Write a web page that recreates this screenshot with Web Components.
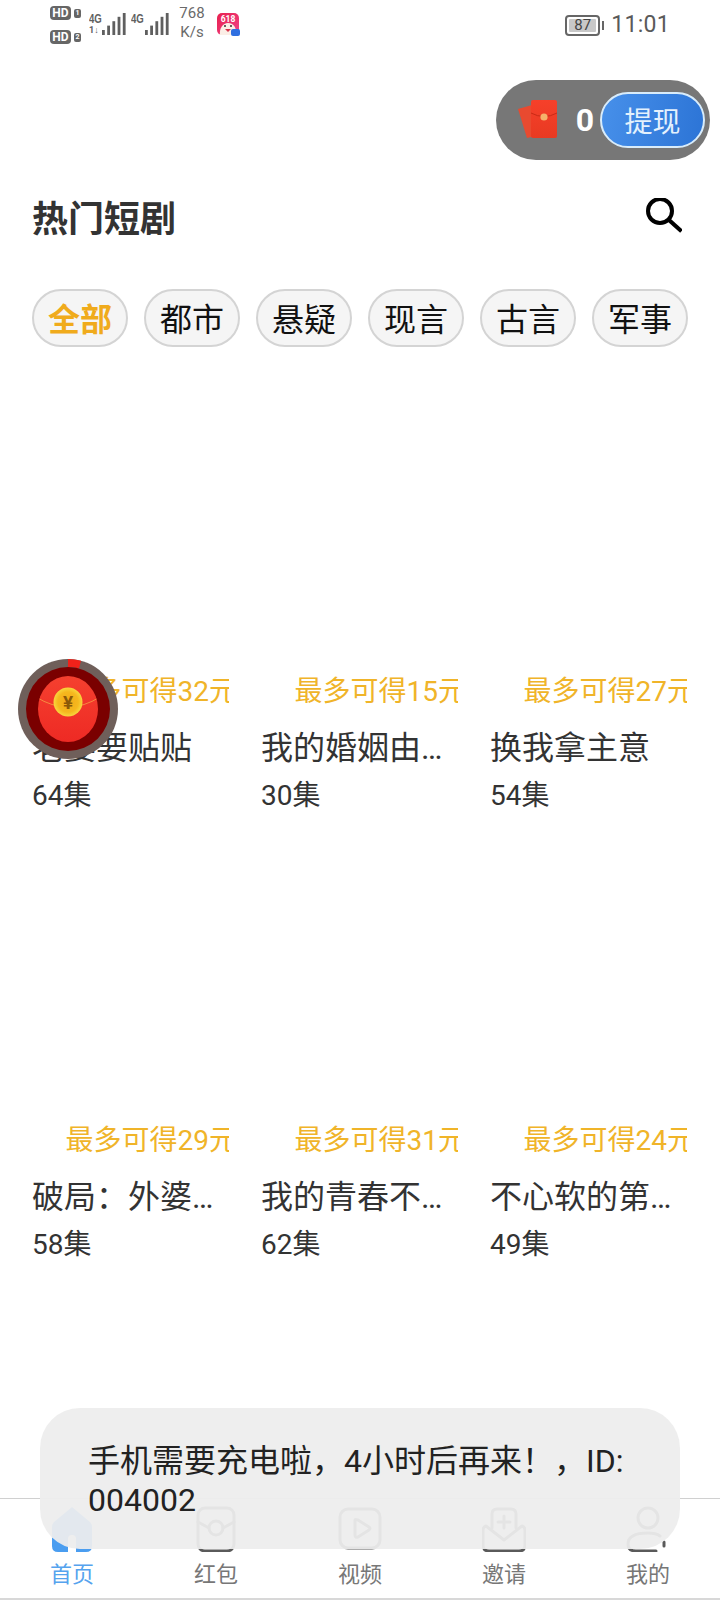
<!DOCTYPE html>
<html lang="zh-CN">
<head>
<meta charset="utf-8">
<title>热门短剧</title>
<style>
  html, body { margin: 0; background: #fff; }
  body { font-family: Roboto, "Noto Sans CJK SC", sans-serif; width: 720px; height: 1600px; overflow: hidden; }
</style>
</head>
<body>
<app-page>
  <status-bar></status-bar>
  <coin-pill></coin-pill>
  <page-header>热门短剧</page-header>
  <filter-row>
    <filter-pill active>全部</filter-pill>
    <filter-pill>都市</filter-pill>
    <filter-pill>悬疑</filter-pill>
    <filter-pill>现言</filter-pill>
    <filter-pill>古言</filter-pill>
    <filter-pill>军事</filter-pill>
  </filter-row>
  <drama-grid>
    <drama-card reward="最多可得32元" name="老婆要贴贴" eps="64集"></drama-card>
    <drama-card reward="最多可得15元" name="我的婚姻由…" eps="30集"></drama-card>
    <drama-card reward="最多可得27元" name="换我拿主意" eps="54集"></drama-card>
    <drama-card reward="最多可得29元" name="破局：外婆…" eps="58集"></drama-card>
    <drama-card reward="最多可得31元" name="我的青春不…" eps="62集"></drama-card>
    <drama-card reward="最多可得24元" name="不心软的第…" eps="49集"></drama-card>
  </drama-grid>
  <tab-bar>
    <tab-item icon="home" active>首页</tab-item>
    <tab-item icon="packet">红包</tab-item>
    <tab-item icon="video">视频</tab-item>
    <tab-item icon="invite">邀请</tab-item>
    <tab-item icon="me">我的</tab-item>
  </tab-bar>
  <float-packet></float-packet>
  <toast-msg>手机需要充电啦，4小时后再来！，ID: 004002</toast-msg>
</app-page>

<script>
// helper para no repetir attachShadow en cada clase
class Base extends HTMLElement {
  constructor() {
    super();
    this.attachShadow({ mode: "open" });
  }
  connectedCallback() {
    this.shadowRoot.innerHTML = this.html();
  }
}

class AppPage extends Base {
  html() {
    return `<style>
      :host { display: flex; flex-direction: column; position: relative; width: 720px; height: 1600px; overflow: hidden; background: #fff; }
    </style><slot></slot>`;
  }
}

class StatusBar extends Base {
  html() {
    const bars = () => {
      let out = "";
      for (let i = 0; i < 5; i++) {
        const h = 5 + i * 4.4;
        out += `<rect x="${i * 5.2}" y="${22 - h}" width="2.8" height="${h}" fill="#5f5f5f"/>`;
      }
      return `<svg width="24" height="22" viewBox="0 0 24 22">${out}</svg>`;
    };
    return `<style>
      :host { display: flex; align-items: flex-start; height: 60px; position: relative; color: #5f5f5f; font-family: Roboto, "Noto Sans CJK SC", sans-serif; }
      .hd { display: flex; flex-direction: column; gap: 10px; margin: 6px 0 0 50px; width: 32px; }
      .hd div { display: flex; align-items: center; gap: 3px; }
      .hd b { width: 21px; height: 14px; border-radius: 4px; background: #666; color: #fff; font: 700 12px/14px Roboto, sans-serif; text-align: center; }
      .hd i { width: 7px; height: 9px; border-radius: 2px; background: #666; color: #fff; font: 700 7px/9px Roboto, sans-serif; text-align: center; }
      .sig { display: flex; align-items: flex-end; margin: 13px 0 0 6px; position: relative; height: 22px; }
      .sig small { position: absolute; left: 1px; top: 0; font: 700 12px/12px "Liberation Sans", sans-serif; transform: scaleX(.8); transform-origin: 0 0; }
      .sig svg { margin-left: 14px; }
      .sig + .sig { margin-left: 4px; }
      .sig + .sig svg { margin-left: 15px; }
      .sig u { position: absolute; left: 1px; bottom: 0; font: 700 9px/9px Roboto, sans-serif; text-decoration: none; }
      .speed { margin: 4px 0 0 9px; width: 28px; text-align: center; font: 15px/19px Roboto, sans-serif; color: #6a6a6a; }
      .app { margin: 13px 0 0 11px; }
      .right { margin: 12px 0 0 auto; padding-right: 50px; display: flex; align-items: center; gap: 2px; }
      .batt { width: 35px; height: 21px; box-sizing: border-box; border: 2px solid #666; border-radius: 4px; padding: 2px; }
      .batt span { display: block; height: 100%; width: 27px; background: #c8c8c8; border-radius: 1px; font: 15px/13px Roboto, sans-serif; text-align: center; color: #444; }
      .nub { width: 2px; height: 9px; background: #666; }
      .time { font: 23px/26px Roboto, sans-serif; margin-left: 5px; letter-spacing: .3px; color: #5a5a5a; }
    </style>
    <div class="hd"><div><b>HD</b><i>1</i></div><div><b>HD</b><i>2</i></div></div>
    <div class="sig"><small>4G</small><u>1↓</u>${bars()}</div>
    <div class="sig"><small>4G</small>${bars()}</div>
    <div class="speed">768<br>K/s</div>
    <svg class="app" width="23" height="23" viewBox="0 0 23 23">
      <defs><linearGradient id="a" x1="0" y1="0" x2="1" y2="1"><stop offset="0" stop-color="#e8204e"/><stop offset="1" stop-color="#f0438a"/></linearGradient></defs>
      <rect width="22" height="22" rx="5" fill="url(#a)"/>
      <path d="M3 22c-1-7 3-12 8-12s9 4 8 12z" fill="#fbeee6"/>
      <circle cx="8" cy="13" r="1" fill="#333"/><circle cx="14" cy="13" r="1" fill="#333"/>
      <path d="M8 16h6l-3 3z" fill="#d8304a"/>
      <text x="11" y="9" text-anchor="middle" font-family="Roboto" font-size="8.500" font-weight="700" fill="#fff">618</text>
      <rect x="14" y="16" width="9" height="7" rx="2" fill="#2f6fe0"/>
    </svg>
    <div class="right">
      <div class="batt"><span>87</span></div><div class="nub"></div>
      <div class="time">11:01</div>
    </div>`;
  }
}

class CoinPill extends Base {
  html() {
    return `<style>
      :host { display: flex; align-self: flex-end; align-items: center; box-sizing: border-box; width: 214px; height: 80px; margin: 20px 10px 0 0; padding: 0 5px 0 22px; border-radius: 40px; background: #777; }
      svg { flex: none; margin-top: -2px; }
      b { flex: 1; text-align: right; padding-right: 6px; font: 700 32px/1 Roboto, sans-serif; color: #fff; }
      button { flex: none; width: 105px; height: 56px; box-sizing: border-box; border: 2px solid #d8ecfb; border-radius: 28px; background: linear-gradient(100deg, #4790ea, #2c74d6); color: #e4f1fd; padding: 0; font: 28px/1 "Noto Sans CJK SC", sans-serif; }
    </style>
    <svg width="40" height="40" viewBox="0 0 40 40">
      <defs><linearGradient id="e" x1="0" y1="0" x2="0" y2="1"><stop offset="0" stop-color="#f6402a"/><stop offset="1" stop-color="#e83a22"/></linearGradient></defs>
      <path d="M0 10l14-4 8 30-13 3z" fill="#e84a30"/>
      <rect x="13" y="1" width="26" height="38" rx="2" fill="url(#e)"/>
      <path d="M13 14q13 7 26 0" fill="none" stroke="#c92a15" stroke-width="1"/>
      <circle cx="26" cy="18" r="3.600" fill="#f5b26a"/>
    </svg>
    <b>0</b><button>提现</button>`;
  }
}

class PageHeader extends Base {
  html() {
    return `<style>
      :host { display: flex; align-items: center; justify-content: space-between; height: 56px; margin-top: 28px; padding: 0 38px 0 32px; }
      h1 { margin: 0; font: 700 36px/56px "Noto Sans CJK SC", sans-serif; color: #333; }
    </style>
    <h1><slot></slot></h1>
    <svg width="36" height="36" viewBox="0 0 36 36" fill="none" stroke="#000" stroke-width="4">
      <circle cx="14" cy="13" r="12"/><path d="M23 22l11 10" stroke-linecap="square"/>
    </svg>`;
  }
}

class FilterRow extends Base {
  html() {
    return `<style>
      :host { display: flex; gap: 16px; margin-top: 45px; padding-left: 32px; }
    </style><slot></slot>`;
  }
}

class FilterPill extends Base {
  html() {
    const active = this.hasAttribute("active");
    return `<style>
      :host { display: block; box-sizing: border-box; width: 96px; height: 58px; border: 2px solid #d4d4d4; border-radius: 29px; background: #f5f5f5; text-align: center; font: ${active ? 700 : 400} 32px/52px "Noto Sans CJK SC", sans-serif; color: ${active ? "#f0ab1c" : "#111"}; }
    </style><slot></slot>`;
  }
}

class DramaGrid extends Base {
  html() {
    return `<style>
      :host { display: grid; grid-template-columns: repeat(3, 197px); column-gap: 32px; grid-auto-rows: 449px; padding-left: 32px; margin-top: 18px; }
    </style><slot></slot>`;
  }
}

class DramaCard extends Base {
  html() {
    return `<style>
      :host { display: flex; flex-direction: column; padding-top: 309px; height: 449px; box-sizing: border-box; min-width: 0; }
      .reward { display: flex; flex: none; justify-content: flex-end; overflow: hidden; height: 36px; font: 28px/36px Roboto, "Noto Sans CJK SC", sans-serif; color: #f0b429; white-space: nowrap; }
      .reward span { flex: none; margin-right: -8px; }
      .name { flex: none; margin-top: 16px; font: 32px/44px Roboto, "Noto Sans CJK SC", sans-serif; color: #333; white-space: nowrap; }
      .eps { flex: none; margin-top: 7px; font: 28px/38px Roboto, "Noto Sans CJK SC", sans-serif; color: #333; }
    </style>
    <div class="reward"><span>${this.getAttribute("reward")}</span></div>
    <div class="name">${this.getAttribute("name")}</div>
    <div class="eps">${this.getAttribute("eps")}</div>`;
  }
}

const TAB_ICONS = {
  home: `<path d="M22 1L40 16q2 2 2 5v19q0 6-6 6H8q-6 0-6-6V21q0-3 2-5z" fill="#4a9df0" stroke="none"/><path d="M18 46V33q0-4 4-4t4 4v13z" fill="#fff" stroke="none"/>`,
  packet: `<rect x="4" y="2" width="36" height="43" rx="7"/><path d="M4 16l11 6M40 16l-11 6"/><circle cx="22" cy="22" r="7"/>`,
  video: `<rect x="2" y="3" width="40" height="39" rx="8"/><path d="M17 14v15q0 3 3 2l11-7q2-2 0-3l-11-7q-3-1-3 0z"/>`,
  invite: `<path d="M10 22V8q0-5 5-5h14q5 0 5 5v14"/><path d="M4 20q-3 1-3 4v15q0 6 6 6h30q6 0 6-6V24q0-3-3-4L22 34z"/><path d="M22 10v12M16 16h12"/>`,
  me: `<circle cx="22" cy="12" r="10"/><path d="M34 30q-4-3-12-3-20 0-20 11 0 7 8 7h20M38 36v4"/>`,
};

class TabBar extends Base {
  html() {
    return `<style>
      :host { display: grid; grid-template-columns: repeat(5, 144px); position: absolute; left: 0; right: 0; top: 1498px; height: 99px; border-top: 1px solid #d0d0d0; border-bottom: 2px solid #d8d8d8; background: #fff; }
    </style><slot></slot>`;
  }
}

class TabItem extends Base {
  html() {
    const active = this.hasAttribute("active");
    return `<style>
      :host { display: flex; flex-direction: column; align-items: center; padding-top: 7px; font: 22px/30px "Noto Sans CJK SC", sans-serif; color: ${active ? "#55a3ee" : "#777"}; }
      svg { display: block; margin-bottom: 5px; }
    </style>
    <svg width="44" height="46" viewBox="0 0 44 46" fill="none" stroke="#5a5a5a" stroke-width="3" stroke-linecap="round" stroke-linejoin="round">${TAB_ICONS[this.getAttribute("icon")]}</svg>
    <slot></slot>`;
  }
}

class FloatPacket extends Base {
  html() {
    return `<style>
      :host { position: absolute; left: 18px; top: 659px; width: 100px; height: 100px; }
      svg { display: block; }
    </style>
    <svg width="100" height="100" viewBox="0 0 100 100">
      <defs>
        <linearGradient id="body" x1="0" y1="0" x2="0" y2="1"><stop offset="0" stop-color="#f5402f"/><stop offset="1" stop-color="#ee2a24"/></linearGradient>
        <radialGradient id="coin"><stop offset="0" stop-color="#f3a818"/><stop offset=".7" stop-color="#f5b81e"/><stop offset="1" stop-color="#f8d63e"/></radialGradient>
        <clipPath id="c"><ellipse cx="50" cy="50" rx="30" ry="33"/></clipPath>
      </defs>
      <circle cx="50" cy="50" r="50" fill="#6f5f5a"/>
      <path d="M50 4a46 46 0 0 1 12 1.600" fill="none" stroke="#f0221a" stroke-width="8"/>
      <circle cx="50" cy="50" r="42" fill="#7a0000"/>
      <ellipse cx="50" cy="50" rx="30" ry="33" fill="url(#body)"/>
      <path d="M18 38q32 20 64 0" fill="none" stroke="#f58a40" stroke-width="1" clip-path="url(#c)"/>
      <circle cx="50" cy="43" r="14.500" fill="url(#coin)"/>
      <text x="50" y="50" text-anchor="middle" font-family="Roboto" font-size="19" font-weight="700" fill="#8a5a08">¥</text>
    </svg>`;
  }
}

class ToastMsg extends Base {
  html() {
    return `<style>
      :host { position: absolute; left: 40px; top: 1408px; width: 640px; height: 141px; box-sizing: border-box; padding: 34px 48px 0; border-radius: 40px; background: rgba(237, 237, 237, .94); font: 32px/39px Roboto, "Noto Sans CJK SC", sans-serif; color: #222; }
    </style><slot></slot>`;
  }
}

customElements.define("app-page", AppPage);
customElements.define("status-bar", StatusBar);
customElements.define("coin-pill", CoinPill);
customElements.define("page-header", PageHeader);
customElements.define("filter-row", FilterRow);
customElements.define("filter-pill", FilterPill);
customElements.define("drama-grid", DramaGrid);
customElements.define("drama-card", DramaCard);
customElements.define("tab-bar", TabBar);
customElements.define("tab-item", TabItem);
customElements.define("float-packet", FloatPacket);
customElements.define("toast-msg", ToastMsg);
</script>
</body>
</html>
